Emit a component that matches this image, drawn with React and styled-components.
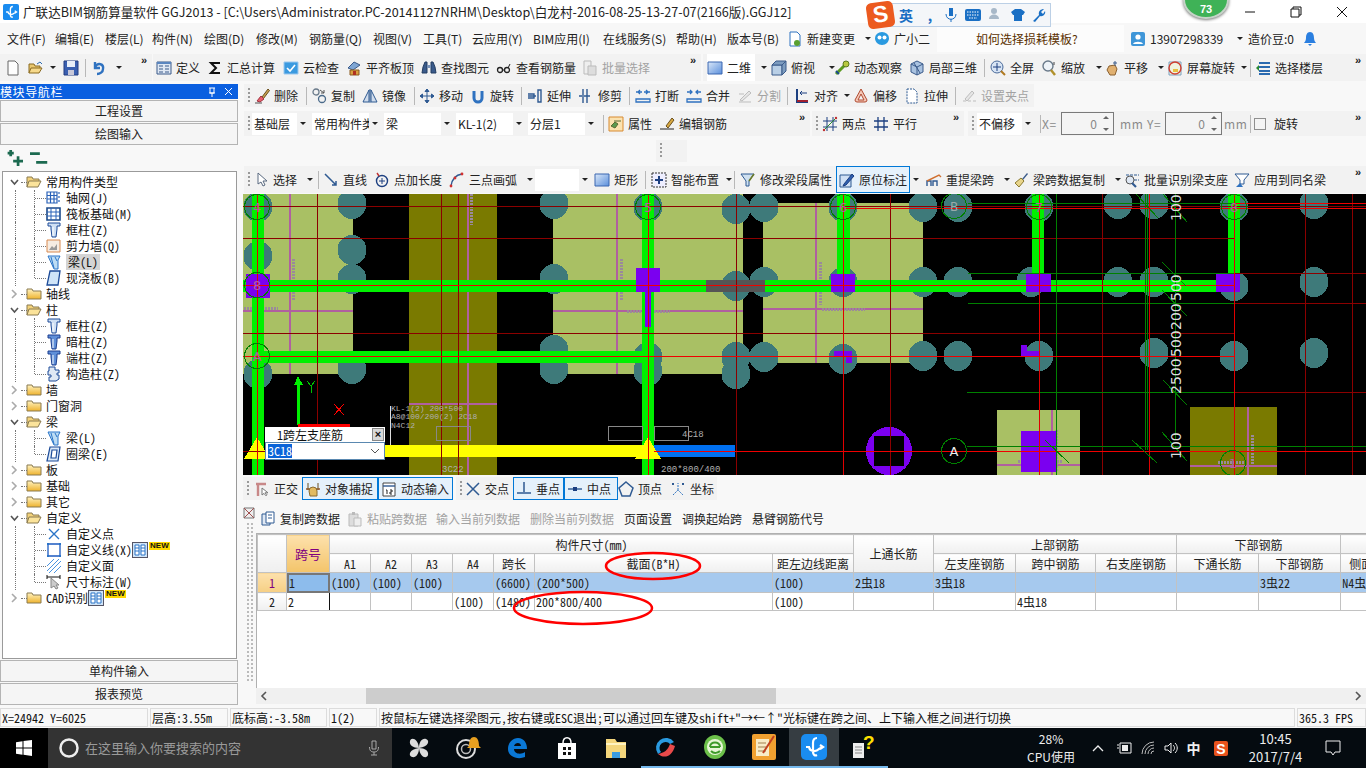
import React from 'react';
import styled, { createGlobalStyle } from 'styled-components';

const Global = createGlobalStyle`
  html, body { margin: 0; padding: 0; width: 1366px; height: 768px; overflow: hidden; background: #f8f8f8; }
  * { box-sizing: border-box; }
`;

const Shell = styled.div`
  position: relative;
  width: 1366px;
  height: 768px;
  overflow: hidden;
  display: flex;
  flex-direction: column;
  font: 12px/16px "Noto Sans CJK SC", "Liberation Sans", sans-serif;
  color: #222;
  font-feature-settings: "hwid";
`;

/* title bar */
const TitleBar = styled.div`
  height: 23px;
  background: #fff;
  display: flex;
  align-items: center;
  padding-left: 3px;
  font-feature-settings: normal;
  color: #222;
`;
const TitleText = styled.div`
  margin-left: 4px;
  font-size: 12.6px;
  white-space: nowrap;
`;
const WinButtons = styled.div`
  margin-left: auto;
  display: flex;
  width: 139px;
  height: 23px;
  align-items: center;
`;
const WinBtn = styled.div`
  width: 46px;
  display: flex;
  justify-content: center;
`;
const Badge = styled.div`
  position: absolute;
  left: 1183px;
  top: -18px;
  width: 46px;
  height: 37px;
  border-radius: 0 0 23px 23px / 0 0 19px 19px;
  background: #3fb257;
  border: 2px solid #c7d3c9;
  box-shadow: 0 1px 3px #777;
  color: #fff;
  font: bold 11px "Liberation Sans", sans-serif;
  text-align: center;
  padding-top: 19px;
`;
const ImeBar = styled.div`
  position: absolute;
  left: 888px;
  top: 3px;
  height: 24px;
  width: 163px;
  display: flex;
  align-items: center;
  padding-left: 5px;
  background: #f4f6f9;
  border: 1px solid #bcd0e6;
  color: #1a6fc4;
  font-weight: bold;
  font-size: 14px;
`;
const ImeSlot = styled.div`
  width: ${p => p.$w}px;
  display: flex;
  justify-content: center;
  flex: none;
`;
const ImeLogo = styled.div`
  position: absolute;
  left: -22px;
  top: -2px;
  width: 27px;
  height: 26px;
  border-radius: 5px;
  background: #ec5a1f;
  transform: rotate(-8deg);
  color: #fff;
  font: bold 23px/25px "Liberation Sans", sans-serif;
  text-align: center;
`;

/* menu */
const MenuBar = styled.div`
  height: 31px;
  background: #f7f7f7;
  display: flex;
  align-items: center;
  font-feature-settings: normal;
`;
const HelpBox = styled.div`
  width: 193px;
  height: 27px;
  background: linear-gradient(#fcfcfc, #fcfcfc) no-repeat 0 0 / 187px 100%;
  color: #5a3000;
  display: flex;
  align-items: center;
  padding-left: 39px;
  flex: none;
`;

/* toolbars */
const ToolRow = styled.div`
  display: flex;
  height: ${p => p.$h}px;
  margin-top: ${p => p.$mt || 0}px;
  flex: none;
  font-feature-settings: normal;
`;
const Bar = styled.div`
  display: flex;
  align-items: center;
  width: ${p => p.$w}px;
  margin-left: ${p => p.$ml || 0}px;
  height: 100%;
  background: #f2f2f2;
  position: relative;
  flex: none;
`;
const Tool = styled.div`
  display: flex;
  align-items: center;
  gap: 4px;
  width: ${p => p.$w}px;
  flex: none;
  height: 100%;
  white-space: nowrap;
  color: ${p => (p.$off ? '#a2a2a2' : '#222')};
  ${p => p.$active && 'background: #e5f1fb; outline: 1px solid #0078d7; outline-offset: -1px; padding-left: 3px;'}
  ${p => p.$white && 'background: linear-gradient(#fff, #fff) no-repeat 0 0 / 48px 100%;'}
`;
const Caret = styled.i`
  width: 0;
  height: 0;
  border: 3px solid transparent;
  border-top: 3px solid #222;
  border-bottom: 0;
  margin-left: ${p => p.$ml ?? 4}px;
  flex: none;
`;
const Grip = styled.div`
  width: ${p => p.$w}px;
  flex: none;
  height: 16px;
  background: repeating-linear-gradient(to bottom, #9a9a9a 0 2px, transparent 2px 4px) no-repeat 4px 0 / 2px 100%;
`;
const Sep = styled.div`
  width: ${p => p.$w}px;
  height: 18px;
  flex: none;
  background: linear-gradient(#b8b8b8, #b8b8b8) no-repeat 3px 0 / 1px 100%;
`;
const Chev = styled.div`
  position: absolute;
  right: 5px;
  top: 1px;
  font: bold 11px/11px "Liberation Sans", sans-serif;
  color: #222;
`;
const ComboBox = styled.div`
  display: flex;
  align-items: center;
  background: #fff;
  width: ${p => p.$w}px;
  height: 22px;
  margin-right: 3px;
  padding-left: 2px;
  flex: none;
  overflow: hidden;
  white-space: nowrap;
`;
const ComboText = styled.span`
  flex: 1;
  min-width: 0;
  overflow: hidden;
`;
const ComboArrow = styled.span`
  width: 12px;
  height: 22px;
  background: #f2f2f2;
  display: flex;
  align-items: center;
  justify-content: center;
  flex: none;
`;
const Spin = styled.div`
  width: ${p => p.$w}px;
  height: 23px;
  flex: none;
  border: 1px solid #7a7a7a;
  background: #f4f4f4;
  color: #888;
  display: flex;
  align-items: center;
  justify-content: flex-end;
  padding-right: 16px;
  position: relative;
`;
const SpinArrows = styled.span`
  position: absolute;
  right: 4px;
  top: 3px;
  bottom: 3px;
  display: flex;
  flex-direction: column;
  justify-content: space-between;
`;
const Tri = styled.i`
  width: 0;
  height: 0;
  border: 3px solid transparent;
  ${p => (p.$up ? 'border-bottom: 3px solid #666; border-top: 0;' : 'border-top: 3px solid #666; border-bottom: 0;')}
`;
const FieldLabel = styled.span`
  color: #8a8a8a;
  width: ${p => p.$w}px;
  padding-left: ${p => p.$pl || 0}px;
  letter-spacing: 0.6px;
  flex: none;
`;
const Check = styled.i`
  width: 12px;
  height: 12px;
  margin-left: 2px;
  border: 1px solid #8f8f8f;
  background: #f4f4f4;
  flex: none;
`;
const CheckLabel = styled.span`
  margin-left: 8px;
`;

/* body */
const Body = styled.div`
  height: 624px;
  margin-top: 3px;
  display: flex;
  flex: none;
`;
const Side = styled.div`
  width: 243px;
  flex: none;
  padding-right: 5px;
  display: flex;
  flex-direction: column;
`;
const SideHead = styled.div`
  height: 15px;
  background: #0a5fe0;
  color: #fff;
  display: flex;
  align-items: center;
  justify-content: space-between;
  padding: 0 3px 0 0;
  font-size: 12px;
  letter-spacing: 0.6px;
  flex: none;
`;
const SideBtn = styled.div`
  height: 22px;
  margin-top: 1px;
  border: 1px solid #b4b4b4;
  background: #f5f5f5;
  text-align: center;
  line-height: 20px;
  font-size: 12px;
  flex: none;
`;
const ExpandRow = styled.div`
  height: 26px;
  display: flex;
  align-items: center;
  gap: 7px;
  padding-left: 7px;
  flex: none;
`;
const TreeBox = styled.div`
  height: 488px;
  margin: 0 1px 0 2px;
  border: 1px solid #9a9a9a;
  background: #fff;
  padding-top: 2px;
  flex: none;
  overflow: hidden;
`;
const TreeRow = styled.div`
  position: relative;
  height: 16px;
  display: flex;
  align-items: center;
  padding-left: ${p => (p.$child ? 43 : 7)}px;
  white-space: nowrap;
  color: #111;
`;
const TreeGuide = styled.i`
  position: absolute;
  left: 12px;
  top: 0;
  height: 16px;
  border-left: 1px dotted #777;
`;
const TreeElbow = styled.i`
  position: absolute;
  left: 31px;
  top: 0;
  height: ${p => (p.$last ? 8 : 16)}px;
  border-left: 1px dotted #777;
`;
const TreeDash = styled.i`
  position: absolute;
  left: ${p => p.$l}px;
  top: 8px;
  width: ${p => p.$w}px;
  border-top: 1px dotted #777;
`;
const Arrow = styled.span`
  width: 8px;
  height: 8px;
  margin-right: 8px;
  flex: none;
  display: flex;
`;
const TreeText = styled.span`
  margin-left: 4px;
  padding: 0 ${p => (p.$sel ? 2 : 0)}px;
  ${p => p.$sel && 'background: #d4d4d4;'}
  height: 16px;
  line-height: 16px;
`;
const NewTag = styled.span`
  background: #ffd800;
  color: #111;
  font: bold 8px/8px "Liberation Sans", sans-serif;
  padding: 0 1px;
  margin-top: -8px;
  margin-left: 1px;
`;
const Right = styled.div`
  width: 1123px;
  display: flex;
  flex-direction: column;
`;
const Canvas = styled.div`
  position: relative;
  width: 1123px;
  height: 281px;
  background: #000;
  flex: none;
  margin: 1px 0 2px;
  overflow: hidden;
  svg { display: block; }
`;
const Popup = styled.div`
  position: absolute;
  left: 22px;
  top: 233px;
  width: 120px;
  background: #fff;
  color: #111;
`;
const PopupHead = styled.div`
  height: 15px;
  display: flex;
  align-items: center;
  justify-content: space-between;
  padding-left: 12px;
  line-height: 15px;
`;
const PopupClose = styled.span`
  width: 12px;
  height: 13px;
  margin-right: 1px;
  background: #d8d8d8;
  border: 1px solid #888;
  font: bold 11px/11px "Liberation Sans", sans-serif;
  text-align: center;
`;
const PopupInput = styled.div`
  height: 18px;
  border: 1px solid #5a88b0;
  display: flex;
  align-items: center;
  justify-content: space-between;
  padding: 0 4px 0 2px;
`;
const Selected = styled.span`
  background: #0a64d8;
  color: #fff;
  line-height: 14px;
`;

/* lower panel */
const Panel = styled.div`
  flex: 1;
  display: flex;
  margin-top: 5px;
  margin-bottom: 4px;
  min-height: 0;
`;
const Splitter = styled.div`
  width: 13px;
  flex: none;
  padding: 3px 0 0 1px;
  background: repeating-linear-gradient(to bottom, #bbb 0 2px, transparent 2px 4px) no-repeat 4px 18px / 2px 160px,
    repeating-linear-gradient(to bottom, #bbb 0 2px, transparent 2px 4px) no-repeat 8px 18px / 2px 160px;
`;
const PanelMain = styled.div`
  flex: 1;
  min-width: 0;
  display: flex;
  flex-direction: column;
`;
const GridTools = styled.div`
  height: 28px;
  display: flex;
  align-items: center;
  padding-left: 4px;
  flex: none;
  font-feature-settings: normal;
`;
const TableWrap = styled.div`
  position: relative;
  flex: 1;
  background: #fff;
  border-top: 1px solid #b0b0b0;
  border-left: 1px solid #b0b0b0;
  overflow: hidden;
`;
const Grid = styled.table`
  table-layout: fixed;
  border-collapse: collapse;
  width: 1110px;
  font-size: 12px;
  th, td {
    border: 1px solid #c2c2c2;
    padding: 0 1px;
    white-space: nowrap;
    overflow: hidden;
    font-weight: normal;
  }
  th { height: 19px; line-height: 15px; background: linear-gradient(#fff, #efefef); text-align: center; color: #222; }
  td { line-height: 15px; }
`;
const KeyHead = styled.th`
  && { background: linear-gradient(#fde1ac, #f3c46a); color: #800080; font-size: 13px; }
`;
const LastHead = styled.th`
  && { text-align: left; padding-left: 8px; }
`;
const RowHead = styled.td`
  text-align: center;
  background: ${p => (p.$on ? 'linear-gradient(#fde1ac, #f6cf84)' : 'linear-gradient(#fff, #efefef)')};
  color: ${p => (p.$on ? '#800080' : '#222')};
`;
const Row = styled.tr`
  height: ${p => (p.$on ? 20 : 18)}px;
  background: ${p => (p.$on ? '#a6c9ee' : '#fff')};
`;
const KeyCell = styled.td`
  position: relative;
  ${p => p.$on && '&& { background: #8dbcec; outline: 2px solid #777; outline-offset: -2px; padding-left: 2px; }'}
  ${p => p.$cursor && '&& { border-right: 1px solid #111; }'}
`;
const RingLayer = styled.svg`
  position: absolute;
  left: 0;
  top: 0;
  pointer-events: none;
`;
const HScroll = styled.div`
  height: 16px;
  background: #f0f0f0;
  display: flex;
  align-items: center;
  justify-content: space-between;
  padding: 0 5px;
  position: relative;
  flex: none;
  color: #555;
`;
const Thumb = styled.div`
  position: absolute;
  left: 110px;
  width: 410px;
  top: 0;
  bottom: 0;
  background: #cdcdcd;
`;

/* status */
const Status = styled.div`
  height: 20px;
  display: flex;
  gap: 2px;
  padding-bottom: 1px;
  background: #f8f8f8;
  flex: none;
`;
const StatusCell = styled.div`
  width: ${p => p.$w}px;
  flex: ${p => (p.$grow ? 1 : 'none')};
  border: 1px solid #dcdcdc;
  background: #f8f8f8;
  padding-left: 1px;
  line-height: 17px;
  white-space: nowrap;
  overflow: hidden;
  color: #111;
`;

/* taskbar */
const Taskbar = styled.div`
  height: 40px;
  flex: none;
  background: #050b10;
  display: flex;
  align-items: stretch;
  color: #eee;
  font-feature-settings: normal;
`;
const Start = styled.div`
  width: 48px;
  background: #000;
  display: flex;
  align-items: center;
  justify-content: center;
`;
const Search = styled.div`
  width: 344px;
  background: #333;
  display: flex;
  align-items: center;
  padding-left: 10px;
  gap: 5px;
  color: #9a9a9a;
  font-size: 13px;
  margin-right: 2px;
`;
const MicSlot = styled.span`
  margin-left: auto;
  margin-right: 10px;
  display: flex;
`;
const AppSlot = styled.div`
  width: 49.4px;
  flex: none;
  position: relative;
  display: flex;
  align-items: center;
  justify-content: center;
  ${p => p.$cur && 'background: #363d42;'}
  ${p => p.$on && 'border-bottom: 2px solid #76b9ed;'}
`;
const Tray = styled.div`
  margin-left: auto;
  display: flex;
`;
const TrayCell = styled.div`
  width: ${p => p.$w}px;
  display: flex;
  flex-direction: column;
  align-items: center;
  justify-content: center;
  line-height: 18px;
  font-weight: ${p => (p.$b ? 'bold' : 'normal')};
  font-size: ${p => p.$fs || 12}px;
`;

const Svg = styled.svg`
  flex: none;
  display: block;
  overflow: visible;
`;

const col = (a, b) => (
  <>
    <path d="M2 1h12v3h-3v3l-1 8H6L5 7V4H2z" fill={a} stroke={b} />
    <path d="M7 5v9" stroke="#fff" />
  </>
);

const ICONS = {
  doc: <path d="M3 1h7l3 3v11H3z" fill="#fdfdfd" stroke="#666" />,
  open: (
    <>
      <path d="M1 13V4h5l1 2h5v2" fill="#e9c76e" stroke="#8a6a20" />
      <path d="M1 13l2-5h11l-3 5z" fill="#f6d98b" stroke="#8a6a20" />
      <path d="M9 4l3-2 2 2" fill="none" stroke="#2a6ab0" />
    </>
  ),
  save: (
    <>
      <path d="M1 1h14v14H1z" fill="#3a5fb0" stroke="#223c80" />
      <path d="M4 1h8v6H4z" fill="#e8eef8" />
      <path d="M5 10h6v5H5z" fill="#c8c8d8" />
    </>
  ),
  undo: <path d="M4 2v6h5M4 7c3-5 9-3 8 2 0 3-3 5-6 5" fill="none" stroke="#2f72c0" strokeWidth="2.4" />,
  define: (
    <>
      <path d="M1 2h14v12H1z" fill="#dfe8f4" stroke="#3a5a8a" />
      <path d="M1 2h14v2H1z" fill="#5a86c0" />
      <path d="M3 6h4M3 9h4M3 12h4M9 6h4M9 9h4M9 12h4" stroke="#3a5a8a" />
    </>
  ),
  sigma: <path d="M13 3H4l5 5-5 5h9" fill="none" stroke="#111" strokeWidth="2" />,
  cloud: (
    <>
      <path d="M1 2h14v12H1z" fill="#3b9ae0" stroke="#9cc8ee" />
      <path d="M4 8l3 3 5-6" fill="none" stroke="#fff" strokeWidth="1.6" />
    </>
  ),
  level: (
    <>
      <path d="M2 8l6-6 6 3-7 5z" fill="#7fa6d4" stroke="#3a5a8a" />
      <path d="M4 10h9v5H4z" fill="#d9a040" stroke="#8a5a20" />
      <path d="M7 11h3v4H7z" fill="#b03020" />
    </>
  ),
  bino: (
    <>
      <path d="M2 7l2-5h2v11H1zM14 7l-2-5h-2v11h5z" fill="#3a5a8a" stroke="#223c60" />
      <path d="M6 5h4v3H6z" fill="#7a93b8" />
    </>
  ),
  glasses: (
    <>
      <circle cx="4" cy="10" r="2.5" fill="none" stroke="#222" strokeWidth="1.3" />
      <circle cx="11" cy="10" r="2.5" fill="none" stroke="#222" strokeWidth="1.3" />
      <path d="M6.5 10h2M12 8l2-4" stroke="#222" />
    </>
  ),
  batch: (
    <>
      <path d="M2 1h7v13H2z" fill="#eee" stroke="#bbb" />
      <path d="M6 6h8v9H6z" fill="#ddd" stroke="#bbb" />
    </>
  ),
  square: (
    <>
      <defs>
        <linearGradient id="sq" x1="0" y1="0" x2="1" y2="1">
          <stop offset="0" stopColor="#dbe8f8" />
          <stop offset="1" stopColor="#5a8fdc" />
        </linearGradient>
      </defs>
      <path d="M1 2h14v12H1z" fill="url(#sq)" stroke="#3a66b0" />
    </>
  ),
  box3d: (
    <>
      <path d="M1 5h10v10H1z" fill="#b9cfe6" stroke="#3a5a8a" />
      <path d="M1 5l4-4h10l-4 4zM11 5l4-4v10l-4 4z" fill="#7d9cbf" stroke="#3a5a8a" />
    </>
  ),
  orbit: (
    <>
      <path d="M2 14L13 3" stroke="#5a9a20" strokeWidth="3" />
      <circle cx="12" cy="4" r="3" fill="#b8c840" stroke="#5a7a20" />
      <path d="M2 11l3 3" stroke="#1a4a8a" strokeWidth="2" />
    </>
  ),
  local3d: (
    <>
      <path d="M8 1l6 3v8l-6 3-6-3V4z" fill="#a9c2e0" stroke="#3a5a8a" />
      <path d="M2 4l6 3 6-3M8 7v8M5 3l6 10" fill="none" stroke="#3a5a8a" />
    </>
  ),
  zoomAll: (
    <>
      <circle cx="7" cy="7" r="6" fill="#d7e4f4" stroke="#4a6a9a" />
      <path d="M7 3v8M3 7h8" stroke="#1c3f80" />
      <path d="M11 11l4 4" stroke="#b07a20" strokeWidth="2" />
    </>
  ),
  zoom: (
    <>
      <circle cx="7" cy="6" r="5" fill="#eef3f8" stroke="#6a7a8a" strokeWidth="1.4" />
      <path d="M10 10l4 5" stroke="#b0902a" strokeWidth="2.4" />
      <path d="M13 2v3" stroke="#444" />
    </>
  ),
  pan: (
    <>
      <path d="M3 10l2-4 6-1 2 4-2 6H6z" fill="#e0b070" stroke="#8a6030" />
      <path d="M11 1v5M9 3h4" stroke="#3a5a8a" />
    </>
  ),
  rotateScr: (
    <>
      <path d="M2 2h12v13H2z" fill="#f0f4e0" stroke="#7aa0c0" />
      <circle cx="8" cy="8" r="6" fill="none" stroke="#d04030" strokeWidth="1.4" />
      <path d="M6 9h5v3H6z" fill="#e8c040" />
    </>
  ),
  floors: (
    <>
      <path d="M4 3h11M4 7h11M4 11h11M4 14h11" stroke="#2a6ab0" strokeWidth="2" />
      <path d="M1 8l3-3v6z" fill="#2a8a30" />
    </>
  ),
  erase: (
    <>
      <path d="M8 9L14 1l1.500 1.500-6 8z" fill="#c8a050" stroke="#6a5020" />
      <path d="M3 13l4-5 3 3-4 3z" fill="#e8606a" stroke="#a03040" />
      <path d="M1 15h7" stroke="#555" />
    </>
  ),
  copy: (
    <>
      <circle cx="5" cy="4" r="3" fill="none" stroke="#6a7a8a" strokeWidth="1.3" />
      <circle cx="11" cy="11" r="3.500" fill="none" stroke="#4a6a8a" strokeWidth="1.3" />
      <path d="M9 2l4 3M13 2v3h-3" fill="none" stroke="#555" />
    </>
  ),
  mirror: <path d="M7 2v12H1zM9 2v12h6zM8 1v14" fill="#d0dcec" stroke="#2f5a92" />,
  move: <path d="M8 1v14M1 8h14M8 1L6 3.500h4zM8 15l-2-2.500h4zM1 8l2.500-2v4zM15 8l-2.500-2v4z" fill="#2f5a92" stroke="#2f5a92" />,
  rotate: <path d="M4 3v7a4 4 0 0 0 8 0V3" fill="none" stroke="#2f72c0" strokeWidth="3" />,
  extend: <path d="M1 8h8M1 6h6v4H1M11 2h3v12h-3z" fill="none" stroke="#2f5a92" strokeWidth="1.4" />,
  trim: <path d="M5 1v14M9 1v14M1 8h3M6 8h6" fill="none" stroke="#2f5a92" strokeWidth="1.4" />,
  breakL: <path d="M1 4h6M9 4h6M5 2L3 4l2 2M11 2l2 2-2 2M1 11h14v3H1z" fill="none" stroke="#2f72c0" strokeWidth="1.3" />,
  merge: <path d="M1 4h5M10 4h5M4 2l2 2-2 2M12 2l-2 2 2 2M1 11h14v3H1z" fill="none" stroke="#2f72c0" strokeWidth="1.3" />,
  split: <path d="M2 14h12M3 12l9-9 2 2-9 8zM2 6h5" fill="#e6e6e6" stroke="#bdbdbd" />,
  align: (
    <>
      <path d="M3 1v13h11" fill="none" stroke="#1c3f80" strokeWidth="2" />
      <path d="M3 14h11v-2H3z" fill="#a02030" />
      <path d="M13 5H6M8 3L6 5l2 2" fill="none" stroke="#1c3f80" />
    </>
  ),
  offset: <path d="M8 1l6 11a2 2 0 0 1-2 2H4a2 2 0 0 1-2-2zM8 6l3 6H5z" fill="#f4c8b8" stroke="#b04a30" fillRule="evenodd" />,
  stretch: <path d="M3 1h7l3 3v11H3z" fill="#fff" stroke="#2f5a92" strokeDasharray="2 1" />,
  grips: <path d="M2 13h3M7 13h3M12 13h3M4 11l7-8 2 2-7 8z" fill="#e6e6e6" stroke="#bdbdbd" />,
  prop: (
    <>
      <path d="M1 1h14v14H1z" fill="#fbe2b0" stroke="#d88a30" />
      <path d="M3 10l4-4 3 2-3 4zM6 5h7" fill="#5a9a50" stroke="#5a6a30" />
    </>
  ),
  editBar: (
    <>
      <path d="M1 13h14" stroke="#222" />
      <path d="M7 10l6-8 2 2-6 8z" fill="#d8a840" stroke="#6a5020" />
    </>
  ),
  twoPt: (
    <>
      <path d="M5 1v14M11 1v14M1 5h14M1 11h14" stroke="#1c3f80" />
      <path d="M2 14L14 2" stroke="#2a8a30" />
      <circle cx="14" cy="2" r="1.200" fill="#c03030" />
      <circle cx="2" cy="14" r="1.200" fill="#c03030" />
    </>
  ),
  parallel: <path d="M5 1v14M11 1v14M1 5h14M1 11h14" stroke="#1c3f80" strokeWidth="1.3" />,
  pointer: <path d="M5 1v11l3-2 2 4 2-1-2-4h4z" fill="#fff" stroke="#5a6a80" />,
  line: <path d="M2 2l11 11M9 13h4V9" fill="none" stroke="#2f5a92" strokeWidth="1.5" />,
  ptLen: (
    <>
      <circle cx="8" cy="9" r="5.500" fill="none" stroke="#1c3f80" strokeWidth="1.4" />
      <path d="M8 6v6M5 9h6" stroke="#1c3f80" />
      <path d="M3 1l2 3" stroke="#c03030" strokeWidth="1.4" />
    </>
  ),
  arc: (
    <>
      <path d="M2 14C3 7 6 3 13 2" fill="none" stroke="#2f5a92" strokeWidth="1.4" />
      <circle cx="2" cy="14" r="1.400" fill="#d03030" />
      <circle cx="6" cy="6" r="1.400" fill="#d03030" />
      <circle cx="13" cy="2" r="1.400" fill="#d03030" />
    </>
  ),
  smart: (
    <>
      <path d="M1 1h14v14H1z" fill="#eef" stroke="#333" strokeDasharray="2 1" />
      <path d="M8 4v8M4 8h8" stroke="#1c3f80" strokeWidth="2" />
    </>
  ),
  funnelPen: (
    <>
      <path d="M1 2h13L9 9v5H6V9z" fill="#cfe0f0" stroke="#2f5a92" />
      <path d="M9 9l5-7" stroke="#6a7a2a" strokeWidth="1.6" />
    </>
  ),
  mark: (
    <>
      <path d="M1 3h11v12H1z" fill="#cfe0f4" stroke="#2f5a92" />
      <path d="M5 12l8-10 2 2-8 9-3 1z" fill="#2f5fb0" stroke="#1c3f80" />
    </>
  ),
  lift: (
    <>
      <path d="M1 14V9h4v5M7 14V9h4v5" fill="none" stroke="#2f5a92" strokeWidth="1.4" />
      <path d="M1 9l12-6 2 2" fill="none" stroke="#d07030" strokeWidth="1.4" />
    </>
  ),
  brush: (
    <>
      <path d="M9 7l5-6 1 1-5 6z" fill="#3a5a8a" />
      <path d="M2 11l6-5 3 3-5 6z" fill="#e8d48a" stroke="#8a7a30" />
    </>
  ),
  batchSupport: (
    <>
      <path d="M2 3h13M2 8h13" stroke="#2f5a92" strokeWidth="1.2" strokeDasharray="3 1" />
      <circle cx="6" cy="8" r="4" fill="#dfe8f4" stroke="#555" />
      <path d="M8 11l4 4" stroke="#2f5a92" strokeWidth="2.2" />
    </>
  ),
  applySame: (
    <>
      <path d="M1 2h14L10 8v4H6V8z" fill="#fff" stroke="#2f5a92" />
      <path d="M2 15l4-4 3 4z" fill="#2f72c0" />
    </>
  ),
  ortho: (
    <>
      <path d="M2 3h10M4 3v12" stroke="#c88888" strokeWidth="2.4" />
      <path d="M8 7v7l2-1.600 2 2.400 1-1-2-2h3z" fill="#fff" stroke="#777" />
    </>
  ),
  snap: (
    <>
      <path d="M3 2v7M13 2v7" stroke="#6a5020" />
      <path d="M1 8h14" stroke="#8a5020" strokeWidth="1.4" />
      <path d="M4 10a4 4 0 0 1 8 0v5H5z" fill="#e2bb62" stroke="#8a6a30" />
    </>
  ),
  dynInput: (
    <>
      <path d="M2 2h12v13H2z" fill="#fff" stroke="#444" />
      <path d="M2 5h12" stroke="#2f5a92" strokeWidth="1.4" />
      <path d="M5 9h1v4M9 9h2v2H9v2h2" fill="none" stroke="#222" />
    </>
  ),
  cross: <path d="M2 2l12 12M14 2L2 14" stroke="#2f5a92" strokeWidth="1.5" />,
  perp: <path d="M8 1v10M1 12h14" stroke="#2f5a92" strokeWidth="1.5" />,
  midPt: (
    <>
      <path d="M1 8h14" stroke="#2f5a92" strokeWidth="1.4" />
      <path d="M6 6h4v4H6z" fill="#1c3f80" />
    </>
  ),
  vertex: <path d="M8 1l7 6-3 8H4L1 7z" fill="none" stroke="#2f5a92" strokeWidth="1.5" />,
  coord: (
    <>
      <path d="M3 14l5-5 5 5M8 9V2" fill="none" stroke="#2f72c0" strokeDasharray="2 1" />
      <path d="M2 2h2v2H2zM12 2h2v2h-2z" fill="#2f5a92" />
    </>
  ),
  paper: (
    <>
      <path d="M2 3h8v11H2z" fill="#dfe8f4" stroke="#2f5a92" />
      <path d="M6 1h8v11H6z" fill="#fff" stroke="#2f5a92" />
      <path d="M8 4h4M8 7h4" stroke="#2f5a92" />
    </>
  ),
  paste: (
    <>
      <path d="M2 3h9v12H2z" fill="#ddd" stroke="#bbb" />
      <path d="M5 1h3v3H5z" fill="#bbb" />
      <path d="M7 7h7v8H7z" fill="#eee" stroke="#bbb" />
    </>
  ),
  change: (
    <>
      <path d="M3 1h7l3 3v11H3z" fill="#fff" stroke="#2f72c0" />
      <circle cx="10" cy="12" r="3" fill="#5aa030" />
    </>
  ),
  mascot: (
    <>
      <path d="M1 7a7 6 0 0 1 14 0c0 4-3 7-7 7s-7-3-7-7z" fill="#2a9ae0" />
      <circle cx="5.500" cy="6.500" r="2" fill="#fff" />
      <circle cx="10.500" cy="6.500" r="2" fill="#fff" />
    </>
  ),
  user: (
    <>
      <rect x="1" y="1" width="14" height="14" rx="2" fill="#3f96d8" />
      <circle cx="8" cy="6" r="2.600" fill="#fff" />
      <path d="M3 13c1-3 9-3 10 0z" fill="#fff" />
    </>
  ),
  bell: <path d="M8 1c3 0 4 3 4 6 0 2 1 4 2 5H2c1-1 2-3 2-5 0-3 1-6 4-6zM6 13h4l-2 2z" fill="#2b7fe0" />,
  gridT: <path d="M1 2h10v11H1zM1 5.500h10M1 9h10M4.500 2v11M8 2v11M13 2v2M13 6v2M13 10v2" fill="none" stroke="#2a62b8" strokeWidth="1.2" />,
  raft: (
    <>
      <path d="M1 2h13v12H1z" fill="#fff" stroke="#1c4a8a" strokeWidth="1.6" />
      <path d="M5 2v12M10 2v12M1 6h13M1 10h13" stroke="#2a62b8" />
    </>
  ),
  column: col('#cfe0f4', '#1c4a98'),
  columnDark: col('#5f8fd8', '#1c3f90'),
  wall: (
    <>
      <path d="M1 2h13v12H1z" fill="#f6ece2" stroke="#d88a50" />
      <path d="M3 12l3-4 2 2 3-4v6z" fill="#999" />
    </>
  ),
  beam: (
    <>
      <path d="M2 2h12l-2 4v9H8z" fill="#bcdcf4" stroke="#2a74c8" />
      <path d="M5 3l3 11M9 3l2 4" stroke="#2a74c8" />
    </>
  ),
  slab: <path d="M4 1h10l-2 14H1z" fill="#cfe4f8" stroke="#1c4a98" strokeWidth="1.3" />,
  ring: <path d="M4 1h10l-2 14H1zM6 4h5l-1 8H5z" fill="#dceaf8" stroke="#1c4a98" strokeWidth="1.2" fillRule="evenodd" />,
  gz: <path d="M3 1h6v3h4v3h-2v2h2v4l-3 2H3v-4h2V9H2V5h1z" fill="#dfe8f4" stroke="#1c4a98" />,
  cPoint: <path d="M3 3l10 10M13 3L3 13" stroke="#2a74c8" strokeWidth="1.4" />,
  cLine: (
    <>
      <path d="M2 2h12v12H2z" fill="none" stroke="#1c5ac0" strokeWidth="1.3" />
      <path d="M1 1h2v2H1zM13 1h2v2h-2zM1 13h2v2H1zM13 13h2v2h-2z" fill="#2a74c8" />
    </>
  ),
  cFace: <path d="M1 8l7-7M1 13L13 1M3 15L15 3M8 15l7-7" stroke="#4a94e0" />,
  dim: (
    <>
      <path d="M1 1v4M14 1v4M1 3h13" stroke="#111" />
      <path d="M5 4v10l3-2 2 3 2-1-2-3h3z" fill="#ccc" stroke="#888" />
    </>
  ),
  tableNew: (
    <>
      <rect x="0.500" y="0.500" width="15" height="15" fill="#cfe4f8" stroke="#556" />
      <path d="M3 3h4v10H3zM9 3h4v10H9z" fill="#fff" stroke="#2a74c8" />
      <path d="M3 6h4M3 9h4M9 6h4M9 9h4" stroke="#2a74c8" />
    </>
  ),
  folderOpen: (
    <>
      <path d="M1 13V3h5l1 2h6v2" fill="#f3d27a" stroke="#8a7a50" />
      <path d="M1 13l2-6h12l-3 6z" fill="#fbe39a" stroke="#8a7a50" />
    </>
  ),
  folderShut: (
    <>
      <defs>
        <linearGradient id="fo" x1="0" y1="0" x2="0" y2="1">
          <stop offset="0" stopColor="#fff2c0" />
          <stop offset="1" stopColor="#eeb32e" />
        </linearGradient>
      </defs>
      <path d="M1 13V3h5l1 2h8v8z" fill="url(#fo)" stroke="#8a7a50" />
    </>
  ),
  plus: <path d="M3 0v5M0.500 2.500h5M9 5v8M5 9h8" stroke="#1c6a50" strokeWidth="2.200" />,
  minus: <path d="M0 3h8M5 10h9" stroke="#1c6a50" strokeWidth="2.200" />,
  chevDown: <path d="M1 2l3.500 4L8 2" fill="none" stroke="#555" strokeWidth="1.600" />,
  chevRight: <path d="M2 0l4 4-4 4" fill="none" stroke="#aaa" strokeWidth="1.600" />,
  windows: <path d="M0 2.200L6.500 1.300v6.200H0zM7.500 1.100L16 0v7.500H7.500zM0 8.500h6.500v6.200L0 13.800zM7.500 8.500H16V16l-8.500-1.200z" fill="#fff" />,
  mic: <path d="M6 1h4v8H6zM3.500 7c0 4 2 5 4.500 5s4.500-1 4.500-5M8 12v3M5 15h6" fill="none" stroke="#aaa" />,
};

const Ico = ({ n, s = 16, vb = 16 }) => (
  <Svg width={s} height={s} viewBox={`0 0 ${vb} ${vb}`}>
    {ICONS[n]}
  </Svg>
);

// x is where the item starts on the page, its width comes from the next x
const renderBar = (items, end) =>
  items.map((it, i) => {
    const w = (items[i + 1] ? items[i + 1].x : end) - it.x;
    if (it.grip) return <Grip key={i} $w={w} />;
    if (it.sep) return <Sep key={i} $w={w} />;
    if (it.gap) return <Tool key={i} $w={w}>{it.caret && <Caret $ml={3} />}</Tool>;
    return (
      <Tool key={i} $w={w} $off={it.off} $active={it.on} $white={it.white}>
        {it.i && <Ico n={it.i} />}
        {it.t}
        {it.c !== undefined && <Caret $ml={it.c} />}
      </Tool>
    );
  });

const ToolBar = ({ x0, x1, prev, items, more, children }) => (
  <Bar $w={x1 - x0} $ml={x0 - prev}>
    {items && renderBar(items, x1)}
    {children}
    {more && <Chev>»</Chev>}
  </Bar>
);

const Combo = ({ w, children }) => (
  <ComboBox $w={w}>
    <ComboText>{children}</ComboText>
    <ComboArrow><Caret $ml={0} /></ComboArrow>
  </ComboBox>
);

const ROW1A = [
  { gap: 1, x: 0 }, { i: 'doc', x: 5 }, { i: 'open', c: 2, x: 28 }, { i: 'save', x: 63 }, { sep: 1, x: 82 },
  { i: 'undo', c: 5, x: 91 },
];
const ROW1B = [
  { gap: 1, x: 153 }, { i: 'define', t: '定义', x: 156 }, { i: 'sigma', t: '汇总计算', x: 207 }, { i: 'cloud', t: '云检查', x: 283 },
  { i: 'level', t: '平齐板顶', x: 346 }, { i: 'bino', t: '查找图元', x: 421 }, { i: 'glasses', t: '查看钢筋量', x: 496 },
  { i: 'batch', t: '批量选择', off: 1, x: 582 },
];
const ROW1C = [
  { gap: 1, x: 703 }, { i: 'square', t: '二维', c: 6, white: 1, x: 707 }, { i: 'box3d', t: '俯视', c: 10, x: 771 }, { i: 'orbit', t: '动态观察', x: 834 },
  { i: 'local3d', t: '局部三维', x: 909 }, { sep: 1, x: 981 }, { i: 'zoomAll', t: '全屏', x: 990 }, { i: 'zoom', t: '缩放', c: 7, x: 1041 },
  { i: 'pan', t: '平移', c: 6, x: 1104 }, { i: 'rotateScr', t: '屏幕旋转', c: 2, x: 1167 }, { sep: 1, x: 1247 }, { i: 'floors', t: '选择楼层', x: 1255 },
];
const ROW2 = [
  { grip: 1, x: 244 }, { i: 'erase', t: '删除', x: 254 }, { sep: 1, x: 303 }, { i: 'copy', t: '复制', x: 311 }, { i: 'mirror', t: '镜像', x: 362 },
  { sep: 1, x: 411 }, { i: 'move', t: '移动', x: 419 }, { i: 'rotate', t: '旋转', x: 470 }, { sep: 1, x: 518 }, { i: 'extend', t: '延伸', x: 527 },
  { i: 'trim', t: '修剪', x: 578 }, { sep: 1, x: 626 }, { i: 'breakL', t: '打断', x: 635 }, { i: 'merge', t: '合并', x: 686 }, { i: 'split', t: '分割', off: 1, x: 737 },
  { sep: 1, x: 784 }, { i: 'align', t: '对齐', c: 2, x: 794 }, { i: 'offset', t: '偏移', x: 853 }, { i: 'stretch', t: '拉伸', x: 904 }, { sep: 1, x: 952 },
  { i: 'grips', t: '设置夹点', off: 1, x: 961 },
];
const ROW5 = [
  { grip: 1, x: 244 }, { i: 'pointer', t: '选择', c: 6, x: 253 }, { sep: 1, x: 315 }, { i: 'line', t: '直线', x: 323 }, { i: 'ptLen', t: '点加长度', x: 374 },
  { i: 'arc', t: '三点画弧', c: 6, x: 449 },
];
const ROW5B = [
  { i: 'square', t: '矩形', x: 594 }, { sep: 1, x: 642 }, { i: 'smart', t: '智能布置', c: 3, x: 651 }, { sep: 1, x: 731 },
  { i: 'funnelPen', t: '修改梁段属性', x: 740 }, { i: 'mark', t: '原位标注', on: 1, x: 836 }, { gap: 1, caret: 1, x: 910 }, { i: 'lift', t: '重提梁跨', c: 6, x: 926 },
  { i: 'brush', t: '梁跨数据复制', c: 6, x: 1013 }, { i: 'batchSupport', t: '批量识别梁支座', x: 1124 }, { i: 'applySame', t: '应用到同名梁', x: 1234 },
];
const SNAP_A = [
  { grip: 1, x: 243 }, { i: 'ortho', t: '正交', x: 254 }, { i: 'snap', t: '对象捕捉', on: 1, x: 302 }, { i: 'dynInput', t: '动态输入', on: 1, x: 378 },
];
const SNAP_B = [
  { grip: 1, x: 456 }, { i: 'cross', t: '交点', x: 465 }, { i: 'perp', t: '垂点', on: 1, x: 513 }, { i: 'midPt', t: '中点', on: 1, x: 564 },
  { i: 'vertex', t: '顶点', x: 618 }, { i: 'coord', t: '坐标', x: 670 },
];
const MENU_L = [
  { gap: 1, x: 0 }, { t: '文件(F)', x: 7 }, { t: '编辑(E)', x: 55 }, { t: '楼层(L)', x: 105 }, { t: '构件(N)', x: 152 }, { t: '绘图(D)', x: 204 }, { t: '修改(M)', x: 256 },
  { t: '钢筋量(Q)', x: 309 }, { t: '视图(V)', x: 373 }, { t: '工具(T)', x: 423 }, { t: '云应用(Y)', x: 472 }, { t: 'BIM应用(I)', x: 533 },
  { t: '在线服务(S)', x: 603 }, { t: '帮助(H)', x: 676 }, { t: '版本号(B)', x: 727 }, { i: 'change', t: '新建变更', c: 6, x: 787 }, { i: 'mascot', t: '广小二', x: 874 },
];
const MENU_R = [
  { i: 'user', t: '13907298339', c: 10, x: 1130 }, { t: '造价豆:0', x: 1248 }, { i: 'bell', x: 1302 },
];

const TREE = [
  { t: '常用构件类型', open: 1 },
  { t: '轴网(J)', i: 'gridT', c: 1 },
  { t: '筏板基础(M)', i: 'raft', c: 1 },
  { t: '框柱(Z)', i: 'column', c: 1 },
  { t: '剪力墙(Q)', i: 'wall', c: 1 },
  { t: '梁(L)', i: 'beam', c: 1, sel: 1 },
  { t: '现浇板(B)', i: 'slab', c: 1, last: 1 },
  { t: '轴线' },
  { t: '柱', open: 1 },
  { t: '框柱(Z)', i: 'column', c: 1 },
  { t: '暗柱(Z)', i: 'columnDark', c: 1 },
  { t: '端柱(Z)', i: 'columnDark', c: 1 },
  { t: '构造柱(Z)', i: 'gz', c: 1, last: 1 },
  { t: '墙' },
  { t: '门窗洞' },
  { t: '梁', open: 1 },
  { t: '梁(L)', i: 'beam', c: 1 },
  { t: '圈梁(E)', i: 'ring', c: 1, last: 1 },
  { t: '板' },
  { t: '基础' },
  { t: '其它' },
  { t: '自定义', open: 1 },
  { t: '自定义点', i: 'cPoint', c: 1 },
  { t: '自定义线(X)', i: 'cLine', c: 1, tag: 1 },
  { t: '自定义面', i: 'cFace', c: 1 },
  { t: '尺寸标注(W)', i: 'dim', c: 1, last: 1 },
  { t: 'CAD识别 ', tag: 1 },
];

const TreeNode = ({ n }) => (
  <TreeRow $child={n.c}>
    {n.c && <TreeGuide />}
    {n.c && <TreeElbow $last={n.last} />}
    <TreeDash $l={n.c ? 32 : 18} $w={n.c ? 11 : 6} />
    {!n.c && (
      <Arrow>
        <Ico n={n.open ? 'chevDown' : 'chevRight'} s={8} vb={8} />
      </Arrow>
    )}
    {n.c ? <Ico n={n.i} /> : <Ico n={n.open ? 'folderOpen' : 'folderShut'} />}
    <TreeText $sel={n.sel}>{n.t}</TreeText>
    {n.tag && <Ico n="tableNew" />}
    {n.tag && <NewTag>NEW</NewTag>}
  </TreeRow>
);

const CIRCLES = [
  [258, 207], [258, 256], [352, 204], [352, 250], [352, 279], [258, 374], [352, 369], [554, 204], [554, 279], [554, 350], [554, 369],
  [648, 207], [648, 357], [648, 371], [736, 209], [764, 207], [736, 286], [764, 282], [736, 357], [764, 357], [736, 374],
  [843, 207], [843, 282], [843, 359], [923, 207], [923, 282], [923, 356], [958, 207], [958, 282], [958, 356], [1039, 207], [1031, 282], [1039, 356],
  [1118, 204], [1118, 282], [1154, 204], [1154, 282], [1154, 353], [1234, 207], [1234, 286], [1234, 356], [1314, 204], [1314, 282], [1314, 353],
];
const H_DARK = [[206, 243, 1366], [238, 243, 1234], [333, 243, 1234], [451, 243, 265], [446, 1234, 1366], [273, 1234, 1366], [303, 1234, 1366], [392, 1234, 1366]];
const H_RED = [[285, 243, 1234], [356, 243, 1234], [451, 654, 1366], [203, 1234, 1366], [208, 843, 1366]];
const V_DARK = [317, 441, 458, 736, 890, 1102, 1305, 1352];
const V_RED = [257, 648, 843, 1039, 1149, 1234];
const H_GREEN = [[203, 968, 1234], [208, 968, 1234], [273, 968, 1234], [303, 968, 1234], [392, 967, 1234], [446, 967, 1366], [451, 967, 1366]];
const V_GREEN = [[1056, 194, 478], [1145, 194, 450], [1147, 194, 450], [1175, 194, 440]];
const TICKS = [
  [1136, 194, 1158, 218], [1163, 194, 1187, 222], [1162, 262, 1186, 286], [1162, 290, 1187, 316], [1163, 380, 1187, 405],
  [1162, 432, 1187, 461], [1132, 440, 1157, 463], [1045, 440, 1069, 463],
];
const PINKS = [
  [290, 194, 290, 374], [243, 311, 353, 311], [468, 194, 468, 475], [409, 404, 497, 404], [617, 194, 617, 374], [553, 311, 743, 311],
  [816, 203, 816, 363], [763, 309, 923, 309], [1052, 410, 1052, 475], [997, 465, 1080, 465], [1248, 407, 1248, 475], [1190, 466, 1277, 466],
];
const NOISE = [
  [293, 259, 293, 300], [471, 194, 471, 225], [621, 259, 621, 300], [820, 262, 820, 305], [244, 308, 278, 308], [627, 311, 670, 311],
  [822, 309, 865, 309], [1056, 430, 1056, 472], [1018, 461, 1062, 461], [1252, 435, 1252, 465], [1218, 462, 1245, 462],
];
const AXES = [
  [257, 207, '4'], [257, 285, '8'], [257, 356, 'A'], [648, 207, '5'], [843, 207, '6'], [1039, 207, '7'], [1234, 207, '8'], [1233, 463, '1'],
];
const DIMS = [
  ['100', 221], ['500', 301], ['200', 330], ['500', 357], ['2500', 394], ['100', 459],
];

const Drawing = () => (
  <svg width="1123" height="281" viewBox="243 194 1123 281" fontFamily='"DejaVu Sans", sans-serif' shapeRendering="crispEdges">
    <rect x="243" y="194" width="110" height="180" fill="#a9c064" />
    <rect x="409" y="194" width="88" height="281" fill="#7a7a00" />
    <rect x="553" y="194" width="190" height="180" fill="#a9c064" />
    <rect x="763" y="203" width="160" height="160" fill="#a9c064" />
    <rect x="997" y="410" width="83" height="65" fill="#a9c064" />
    <rect x="1190" y="407" width="87" height="68" fill="#7a7a00" />
    {CIRCLES.map(([x, y], i) => (
      <ellipse key={i} cx={x} cy={y} rx="14.500" ry="15" fill="#3e7a7a" />
    ))}
    {PINKS.map(([a, b, c, d], i) => (
      <line key={i} x1={a} y1={b} x2={c} y2={d} stroke="#b060a0" strokeWidth="2" />
    ))}
    {NOISE.map(([a, b, c, d], i) => (
      <line key={i} x1={a} y1={b} x2={c} y2={d} stroke="#9a8a9a" strokeWidth="3" strokeDasharray="2 1" />
    ))}
    <g fill="#00f000">
      <rect x="252" y="194" width="12" height="281" />
      <rect x="642" y="194" width="12" height="281" />
      <rect x="837" y="194" width="13" height="86" />
      <rect x="1032" y="194" width="12" height="86" />
      <rect x="1228" y="194" width="12" height="86" />
      <rect x="243" y="280" width="973" height="12" />
      <rect x="264" y="351" width="378" height="12" />
    </g>
    <rect x="706" y="280" width="59" height="12" fill="#555" />
    <g fill="#7b00f0">
      <rect x="246" y="274" width="24" height="24" />
      <rect x="636" y="268" width="24" height="24" />
      <rect x="645" y="292" width="6" height="35" />
      <rect x="831" y="274" width="24" height="18" />
      <rect x="1026" y="274" width="25" height="18" />
      <rect x="1216" y="274" width="24" height="18" />
      <path d="M834 351h18v12h-6v-6h-12z" />
      <path d="M1021 345h6v6h12v5h-18z" />
      <rect x="1021" y="431" width="35" height="41" />
      <ellipse cx="889" cy="451" rx="23" ry="24" />
    </g>
    <rect x="874" y="436" width="30" height="30" fill="#000" />
    <rect x="385" y="445" width="258" height="12" fill="#ff0" />
    <rect x="654" y="445" width="81" height="12" fill="#0070f0" />
    <path d="M635 459l13-22 13 22zM244 459l13-22 13 22z" fill="#ff0" />
    {H_DARK.map(([y, a, b], i) => (
      <line key={i} x1={a} x2={b} y1={y} y2={y} stroke="#8b0000" />
    ))}
    {V_DARK.map(x => (
      <line key={x} x1={x} x2={x} y1="194" y2="478" stroke="#8b0000" />
    ))}
    {H_GREEN.map(([y, a, b], i) => (
      <line key={i} x1={a} x2={b} y1={y} y2={y} stroke="#008000" />
    ))}
    {V_GREEN.map(([x, a, b]) => (
      <line key={x} x1={x} x2={x} y1={a} y2={b} stroke="#008000" />
    ))}
    {H_RED.map(([y, a, b], i) => (
      <line key={i} x1={a} x2={b} y1={y} y2={y} stroke="#f00000" />
    ))}
    {V_RED.map(x => (
      <line key={x} x1={x} x2={x} y1="194" y2="478" stroke="#e00000" />
    ))}
    {TICKS.map(([a, b, c, d], i) => (
      <line key={i} x1={a} y1={b} x2={c} y2={d} stroke="#008000" />
    ))}
    {AXES.map(([x, y, t], i) => (
      <g key={i}>
        <circle cx={x} cy={y} r="12.500" fill="none" stroke="#008000" />
        <text x={x} y={y + 5} textAnchor="middle" fontSize="13" fill="#b060a0">{t}</text>
      </g>
    ))}
    <circle cx="954" cy="206" r="12.500" fill="none" stroke="#008000" />
    <text x="954" y="211" textAnchor="middle" fontSize="12" fill="#9aa">B</text>
    <circle cx="954" cy="451" r="12.500" fill="none" stroke="#008000" />
    <text x="954" y="456" textAnchor="middle" fontSize="13" fill="#eee">A</text>
    {DIMS.map(([t, y], i) => (
      <text key={i} transform={`translate(1181 ${y}) rotate(-90)`} fontSize="14" fill="#ddd">{t}</text>
    ))}
    <path d="M298 376l-4 9h3v40h3v-40h3z" fill="#00f000" />
    <path d="M298 424h52v3h-52z" fill="#f00" />
    <path d="M334 404l10 11M344 404l-10 11" stroke="#f00" />
    <path d="M307 381l4 5 4-5M311 386v7" fill="none" stroke="#00c000" />
    <g fill="none" stroke="#888">
      <rect x="436" y="426" width="34" height="14" />
      <rect x="608" y="426" width="34" height="14" />
      <rect x="654" y="426" width="34" height="14" />
    </g>
    <line x1="390" x2="390" y1="406" y2="445" stroke="#ddd" />
    <g fontSize="8" fill="#b0b0b0" fontFamily='"Liberation Mono", monospace'>
      <text x="391" y="411">KL-1(2) 200*500</text>
      <text x="391" y="419">A8@100/200(2) 2C18</text>
      <text x="391" y="428">N4C12</text>
      <text x="682" y="437" fontSize="9">4C18</text>
      <text x="661" y="472" fontSize="9">200*800/400</text>
      <text x="442" y="472" fontSize="9">3C22</text>
    </g>
  </svg>
);

const colW = [29, 43, 41, 41, 41, 41, 41, 238, 81, 80, 82, 80, 81, 82, 82, 27];
const SUB_HEADS = ['A1', 'A2', 'A3', 'A4', '跨长', '截面(B*H)', '距左边线距离', '左支座钢筋', '跨中钢筋', '右支座钢筋', '下通长筋', '下部钢筋'];
const ROWS = [
  ['(100)', '(100)', '(100)', '', '(6600)', '(200*500)', '(100)', '2虫18', '3虫18', '', '', '', '3虫22', 'N4虫'],
  ['', '', '', '(100)', '(1480)', '200*800/400', '(100)', '', '', '4虫18', '', '', '', ''],
];

const SpecTable = () => (
  <Grid>
    <colgroup>
      {colW.map((w, i) => (
        <col key={i} width={w} />
      ))}
    </colgroup>
    <thead>
      <tr>
        <th rowSpan="2" />
        <KeyHead rowSpan="2">跨号</KeyHead>
        <th colSpan="7">构件尺寸(mm)</th>
        <th rowSpan="2">上通长筋</th>
        <th colSpan="3">上部钢筋</th>
        <th colSpan="2">下部钢筋</th>
        <th />
      </tr>
      <tr>
        {SUB_HEADS.map(t => (
          <th key={t}>{t}</th>
        ))}
        <LastHead>侧面钢筋</LastHead>
      </tr>
    </thead>
    <tbody>
      {ROWS.map((r, i) => (
        <Row key={i} $on={i === 0}>
          <RowHead $on={i === 0}>{i + 1}</RowHead>
          <KeyCell $on={i === 0} $cursor={i === 1}>
            {i + 1}
          </KeyCell>
          {r.map((c, j) => (
            <td key={j}>{c}</td>
          ))}
        </Row>
      ))}
    </tbody>
  </Grid>
);

const AppGlyph = ({ s, r }) => (
  <Svg width={s} height={s} viewBox="0 0 26 26">
    <rect width="26" height="26" rx={r} fill="#1a8cf0" />
    <path d="M16 4c-4 0-4 3-4 5v9c0 3 2 4 4 3M5 13h3c1 5 7 5 10 2l4-2M19 11l3 2-3 2" fill="none" stroke="#fff" strokeWidth="2.200" />
  </Svg>
);

export default function App() {
  return (
    <Shell>
      <Global />
      <TitleBar>
        <AppGlyph s={16} r={3} />
        <TitleText>广联达BIM钢筋算量软件 GGJ2013 - [C:\Users\Administrator.PC-20141127NRHM\Desktop\白龙村-2016-08-25-13-27-07(2166版).GGJ12]</TitleText>
        <WinButtons>
          <WinBtn>
            <Svg width="10" height="10"><path d="M0 5h10" stroke="#111" /></Svg>
          </WinBtn>
          <WinBtn>
            <Svg width="10" height="10"><path d="M2 2V0h8v8H8M0 2h8v8H0z" fill="none" stroke="#111" /></Svg>
          </WinBtn>
          <WinBtn>
            <Svg width="10" height="10"><path d="M0 0l10 10M10 0L0 10" stroke="#111" /></Svg>
          </WinBtn>
        </WinButtons>
      </TitleBar>
      <MenuBar>
        {renderBar(MENU_L, 937)}
        <HelpBox>如何选择损耗模板?</HelpBox>
        {renderBar(MENU_R, 1340)}
      </MenuBar>
      <ToolRow $h={27}>
        <ToolBar x0={0} x1={152} prev={0} items={ROW1A} more />
        <ToolBar x0={153} x1={701} prev={152} items={ROW1B} more />
        <ToolBar x0={703} x1={1366} prev={701} items={ROW1C} more />
      </ToolRow>
      <Body>
        <Side>
          <SideHead>
            模块导航栏
            <Svg width="26" height="12" viewBox="0 0 26 12">
              <path d="M0 2h6M1 2v5h4V2M0 7h6M3 7v4" stroke="#fff" fill="none" />
              <path d="M16 2l7 7M23 2l-7 7" stroke="#fff" />
            </Svg>
          </SideHead>
          <SideBtn>工程设置</SideBtn>
          <SideBtn>绘图输入</SideBtn>
          <ExpandRow>
            <Ico n="plus" s={16} vb={13} />
            <Ico n="minus" s={16} vb={13} />
          </ExpandRow>
          <TreeBox>
            {TREE.map((n, i) => (
              <TreeNode key={i} n={n} />
            ))}
          </TreeBox>
          <SideBtn>单构件输入</SideBtn>
          <SideBtn>报表预览</SideBtn>
        </Side>
        <Right>
          <ToolRow $h={23}>
            <ToolBar x0={244} x1={1034} prev={243} items={ROW2} />
          </ToolRow>
          <ToolRow $h={25} $mt={4}>
            <ToolBar x0={244} x1={810} prev={243} more>
              <Grip $w={8} />
              <Combo w={57}>基础层</Combo>
              <Combo w={69}>常用构件类型</Combo>
              <Combo w={69}>梁</Combo>
              <Combo w={69}>KL-1(2)</Combo>
              <Combo w={69}>分层1</Combo>
              <Sep $w={8} />
              <Tool $w={51}><Ico n="prop" />属性</Tool>
              <Tool $w={80}><Ico n="editBar" />编辑钢筋</Tool>
            </ToolBar>
            <ToolBar x0={812} x1={964} prev={810} more>
              <Grip $w={10} />
              <Tool $w={51}><Ico n="twoPt" />两点</Tool>
              <Tool $w={60}><Ico n="parallel" />平行</Tool>
            </ToolBar>
            <ToolBar x0={968} x1={1366} prev={964} more>
              <Grip $w={9} />
              <Combo w={57}>不偏移</Combo>
              <Sep $w={5} />
              <FieldLabel $w={19}>X=</FieldLabel>
              <Spin $w={53}>0<SpinArrows><Tri $up /><Tri /></SpinArrows></Spin>
              <FieldLabel $w={33} $pl={6}>mm</FieldLabel>
              <FieldLabel $w={18}>Y=</FieldLabel>
              <Spin $w={57}>0<SpinArrows><Tri $up /><Tri /></SpinArrows></Spin>
              <FieldLabel $w={25} $pl={2}>mm</FieldLabel>
              <Sep $w={5} />
              <Check />
              <CheckLabel>旋转</CheckLabel>
            </ToolBar>
          </ToolRow>
          <ToolRow $h={22} $mt={4}>
            <ToolBar x0={656} x1={687} prev={243}>
              <Grip $w={12} />
            </ToolBar>
          </ToolRow>
          <ToolRow $h={27} $mt={4}>
            <ToolBar x0={244} x1={1366} prev={243} more>
              {renderBar(ROW5, 535)}
              <Combo w={56} />
              {renderBar(ROW5B, 1340)}
            </ToolBar>
          </ToolRow>
          <Canvas>
            <Drawing />
            <Popup>
              <PopupHead>
                1跨左支座筋
                <PopupClose>×</PopupClose>
              </PopupHead>
              <PopupInput>
                <Selected>3C18</Selected>
                <Svg width="10" height="6"><path d="M1 1l4 4 4-4" fill="none" stroke="#555" /></Svg>
              </PopupInput>
            </Popup>
          </Canvas>
          <ToolRow $h={23}>
            <ToolBar x0={243} x1={453} prev={243} items={SNAP_A} />
            <ToolBar x0={456} x1={717} prev={453} items={SNAP_B} />
          </ToolRow>
          <Panel>
            <Splitter>
              <Svg width="10" height="10" viewBox="0 0 10 10">
                <path d="M0 0h10v10H0z" fill="#eee" stroke="#777" />
                <path d="M0 0l10 10M10 0L0 10" stroke="#a05050" />
              </Svg>
            </Splitter>
            <PanelMain>
              <GridTools>
                <Tool $w={87}><Ico n="paper" />复制跨数据</Tool>
                <Tool $w={89} $off><Ico n="paste" />粘贴跨数据</Tool>
                <Tool $w={94} $off>输入当前列数据</Tool>
                <Tool $w={94} $off>删除当前列数据</Tool>
                <Tool $w={58}>页面设置</Tool>
                <Tool $w={70}>调换起始跨</Tool>
                <Tool $w={76}>悬臂钢筋代号</Tool>
              </GridTools>
              <TableWrap>
                <SpecTable />
                <RingLayer width="1110" height="100" viewBox="256 533 1110 100">
                  <ellipse cx="652" cy="565" rx="47" ry="13" fill="none" stroke="#f00" strokeWidth="2.500" />
                  <ellipse cx="582" cy="607" rx="69" ry="16" fill="none" stroke="#f00" strokeWidth="2.500" />
                </RingLayer>
              </TableWrap>
              <HScroll>
                <Svg width="6" height="10" viewBox="0 0 6 10"><path d="M5 1L1 5l4 4" fill="none" stroke="#555" strokeWidth="1.600" /></Svg>
                <Thumb />
                <Svg width="6" height="10" viewBox="0 0 6 10"><path d="M1 1l4 4-4 4" fill="none" stroke="#555" strokeWidth="1.600" /></Svg>
              </HScroll>
            </PanelMain>
          </Panel>
        </Right>
      </Body>
      <Status>
        <StatusCell $w={148}>X=24942 Y=6025</StatusCell>
        <StatusCell $w={78}>层高:3.55m</StatusCell>
        <StatusCell $w={97}>底标高:-3.58m</StatusCell>
        <StatusCell $w={48}>1(2)</StatusCell>
        <StatusCell $grow>按鼠标左键选择梁图元,按右键或ESC退出;可以通过回车键及shift+"→←↑"光标键在跨之间、上下输入框之间进行切换</StatusCell>
        <StatusCell $w={69}>365.3 FPS</StatusCell>
      </Status>
      <Taskbar>
        <Start><Ico n="windows" /></Start>
        <Search>
          <Svg width="22" height="22" viewBox="0 0 22 22"><circle cx="11" cy="11" r="8.500" fill="none" stroke="#eee" strokeWidth="2.500" /></Svg>
          在这里输入你要搜索的内容
          <MicSlot><Ico n="mic" /></MicSlot>
        </Search>
        <AppSlot>
          <Svg width="24" height="24" viewBox="0 0 24 24">
            <path d="M12 12C6 12 2 9 3 5s8-3 9 7zM12 12c0-6 3-10 7-9s3 8-7 9zM12 12c6 0 10 3 9 7s-8 3-9-7zM12 12c0 6-3 10-7 9s-3-8 7-9z" fill="#ddd" />
          </Svg>
        </AppSlot>
        <AppSlot>
          <Svg width="28" height="28" viewBox="0 0 28 28">
            <circle cx="12" cy="15" r="9" fill="none" stroke="#ddd" strokeWidth="2" />
            <circle cx="12" cy="15" r="4.500" fill="none" stroke="#bbb" strokeWidth="1.500" />
            <path d="M15 12c0-6 2-9 5-9s5 3 5 9l2 2H13z" fill="#e8a020" />
          </Svg>
        </AppSlot>
        <AppSlot>
          <Svg width="24" height="24" viewBox="0 0 24 24">
            <path d="M3 13C3 6 8 2 13 2c6 0 9 5 9 11H9c0 5 7 6 11 3v5c-7 3-17 0-17-8zM9 10h7c0-4-6-4-7 0z" fill="#0a78d6" fillRule="evenodd" />
          </Svg>
        </AppSlot>
        <AppSlot>
          <Svg width="20" height="24" viewBox="0 0 20 24">
            <path d="M1 7h18v16H1z" fill="#fff" />
            <path d="M6 7c0-7 8-7 8 0" fill="none" stroke="#fff" strokeWidth="1.500" />
            <path d="M6 11h3v3H6zM11 11h3v3h-3zM6 16h3v3H6zM11 16h3v3h-3z" fill="#111" />
          </Svg>
        </AppSlot>
        <AppSlot>
          <Svg width="24" height="24" viewBox="0 0 24 24">
            <path d="M2 3h9l2 3h9v16H2z" fill="#f4d67c" />
            <path d="M2 7h20v2H2z" fill="#fff3c0" />
            <path d="M8 16h8v6H8z" fill="#3a9be0" />
          </Svg>
        </AppSlot>
        <AppSlot $on>
          <Svg width="26" height="26" viewBox="0 0 26 26">
            <path d="M5 20a10 10 0 1 1 16-12l-4 2a6 6 0 1 0-9 8z" fill="#2a9ae0" />
            <path d="M5 20c6 5 14 3 17-8l-5-2c-2 6-6 9-12 10z" fill="#e84a4a" />
          </Svg>
        </AppSlot>
        <AppSlot $on>
          <Svg width="26" height="28" viewBox="0 0 26 28">
            <ellipse cx="13" cy="14" rx="11" ry="12" fill="#6cc04a" />
            <ellipse cx="13" cy="14" rx="8" ry="8" fill="#e8f6d8" />
            <path d="M8 14h10M8 14c0-6 10-6 10 0M9 18c3 3 7 2 9 0" fill="none" stroke="#3e9a2a" strokeWidth="2" />
          </Svg>
        </AppSlot>
        <AppSlot $on>
          <Svg width="26" height="28" viewBox="0 0 26 28">
            <rect x="1" y="1" width="24" height="26" rx="2" fill="#f0a030" />
            <path d="M5 6h13v17H5z" fill="#f8ecc8" />
            <path d="M7 10h8M7 14h8M7 18h8" stroke="#a08050" />
            <path d="M12 20L23 3" stroke="#c04020" strokeWidth="2" />
          </Svg>
        </AppSlot>
        <AppSlot $on $cur>
          <AppGlyph s={26} r={5} />
        </AppSlot>
        <AppSlot $on>
          <Svg width="24" height="28" viewBox="0 0 24 28">
            <path d="M2 10h11v15H2z" fill="#eee" />
            <path d="M4 14h7M4 17h7M4 20h7" stroke="#888" />
            <text x="12" y="16" fontFamily="Liberation Sans" fontWeight="bold" fontSize="19" fill="#ffe000">?</text>
          </Svg>
        </AppSlot>
        <Tray>
          <TrayCell $w={66}>
            <span>28%</span>
            <span>CPU使用</span>
          </TrayCell>
          <TrayCell $w={28}>
            <Svg width="12" height="7"><path d="M1 6l5-5 5 5" fill="none" stroke="#eee" strokeWidth="1.300" /></Svg>
          </TrayCell>
          <TrayCell $w={24}>
            <Svg width="16" height="12" viewBox="0 0 16 12"><path d="M1 3h2M1 6h2M4 1h11v10H4z" fill="none" stroke="#eee" /><path d="M6 3h6v6H6z" fill="#eee" /></Svg>
          </TrayCell>
          <TrayCell $w={23}>
            <Svg width="14" height="14" viewBox="0 0 14 14"><path d="M1 13a12 12 0 0 1 12-12M4 13a9 9 0 0 1 9-9M7 13a6 6 0 0 1 6-6M10 13a3 3 0 0 1 3-3" fill="none" stroke="#bbb" /></Svg>
          </TrayCell>
          <TrayCell $w={23}>
            <Svg width="14" height="14" viewBox="0 0 14 14"><path d="M1 5h3l3-3v10L4 9H1zM9 4c2 2 2 4 0 6M11 2c3 3 3 7 0 10" fill="none" stroke="#eee" /></Svg>
          </TrayCell>
          <TrayCell $w={23} $b $fs={14}>中</TrayCell>
          <TrayCell $w={32}>
            <Svg width="14" height="15" viewBox="0 0 14 15">
              <rect width="14" height="15" rx="2" fill="#e8531d" />
              <text x="7" y="13" textAnchor="middle" fontFamily="Liberation Sans" fontWeight="bold" fontSize="14" fill="#fff">S</text>
            </Svg>
          </TrayCell>
          <TrayCell $w={77} $fs={13}>
            <span>10:45</span>
            <span>2017/7/4</span>
          </TrayCell>
          <TrayCell $w={38}>
            <Svg width="16" height="16" viewBox="0 0 16 16"><path d="M1 1h14v11h-5l-2 3-2-3H1z" fill="none" stroke="#eee" /></Svg>
          </TrayCell>
          <TrayCell $w={14} />
        </Tray>
      </Taskbar>
      <Badge>73</Badge>
      <ImeBar>
        <ImeLogo>S</ImeLogo>
        <ImeSlot $w={24}>英</ImeSlot>
        <ImeSlot $w={24}>,</ImeSlot>
        <ImeSlot $w={18}><Svg width="12" height="16" viewBox="0 0 12 16"><path d="M4 1h4v8H4z" fill="#1a6fc4" /><path d="M1 7c0 7 10 7 10 0M6 12v3" fill="none" stroke="#1a6fc4" /></Svg></ImeSlot>
        <ImeSlot $w={25}><Svg width="16" height="12" viewBox="0 0 16 12"><rect width="16" height="12" rx="2" fill="#1a6fc4" /><path d="M2 3h12M2 6h12M4 9h8" stroke="#fff" strokeDasharray="1.500 1" /></Svg></ImeSlot>
        <ImeSlot $w={22}><Svg width="16" height="16" viewBox="0 0 16 16"><circle cx="6" cy="4" r="3" fill="#a8b8c8" /><path d="M1 12c0-6 10-6 10 0z" fill="#a8b8c8" /></Svg></ImeSlot>
        <ImeSlot $w={21}><Svg width="14" height="14" viewBox="0 0 14 14"><path d="M4 1h6l4 3-2 3h-1v6H3V7H2L0 4z" fill="#1a6fc4" /></Svg></ImeSlot>
        <ImeSlot $w={22}><Svg width="14" height="14" viewBox="0 0 14 14"><path d="M1 13l6-6c-1-4 2-6 5-6L9 4l2 2 2-3c1 3-2 6-5 5l-5 6z" fill="#1a6fc4" /></Svg></ImeSlot>
      </ImeBar>
    </Shell>
  );
}
